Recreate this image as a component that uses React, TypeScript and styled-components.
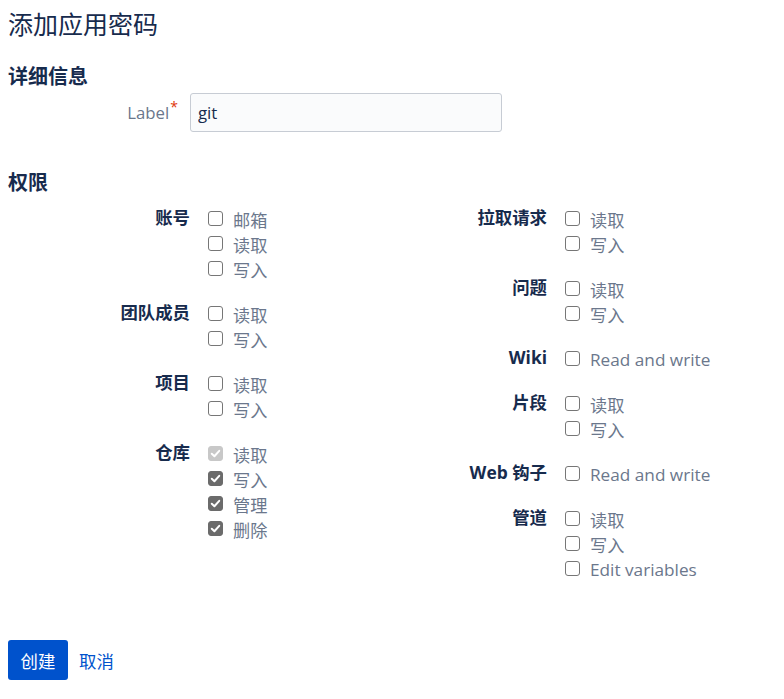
import React from "react";
import styled, { createGlobalStyle } from "styled-components";

const GlobalStyle = createGlobalStyle`
  html, body { margin: 0; padding: 0; background: #ffffff; }
  body {
    font-family: "Open Sans", "Noto Sans CJK SC", sans-serif;
    color: #172b4d;
  }
  * { box-sizing: border-box; }
`;

const Page = styled.div`
  padding: 0 8px;
  width: 784px;
`;

const Title = styled.h1`
  margin: 9px 0 0;
  font-size: 25px;
  line-height: 30px;
  font-weight: 400;
  color: #172b4d;
`;

const SectionHeading = styled.h2<{ $mt: number }>`
  margin: ${(p) => p.$mt}px 0 0;
  font-size: 20px;
  line-height: 24px;
  font-weight: 700;
  color: #172b4d;
`;

const FieldRow = styled.div`
  display: flex;
  align-items: center;
  margin-top: 4.5px;
`;

const FieldLabel = styled.label`
  width: 182px;
  padding-right: 12px;
  text-align: right;
  font-size: 16.8px;
  line-height: 25px;
  color: #6b778c;
`;

const Required = styled.span`
  color: #de350b;
  font-size: 14px;
  position: relative;
  top: -7px;
  margin-left: 1px;
`;

const TextInput = styled.input`
  width: 312px;
  height: 39px;
  border: 1px solid #c7ccd4;
  border-radius: 3px;
  background: #fafbfc;
  padding: 0 7px;
  font-family: inherit;
  font-size: 16.8px;
  color: #172b4d;
  outline: none;
`;

const PermGrid = styled.div`
  margin-top: 12px;
  display: grid;
  grid-template-columns: 357px 357px;
`;

const Column = styled.div`
  display: flex;
  flex-direction: column;
  gap: 20px;
`;

const Group = styled.div`
  display: flex;
  align-items: flex-start;
`;

const GroupLabel = styled.div`
  width: 182px;
  flex: none;
  text-align: right;
  font-size: 17.4px;
  line-height: 25px;
  font-weight: 700;
  color: #172b4d;
  margin-top: -2px;
`;

const Options = styled.div`
  margin-left: 18px;
  display: flex;
  flex-direction: column;
`;

const Option = styled.label`
  display: flex;
  align-items: center;
  height: 25px;
  font-size: 17.2px;
  color: #6b778c;
`;

const Box = styled.span<{ $checked?: boolean; $disabled?: boolean }>`
  width: 15px;
  height: 15px;
  flex: none;
  margin-right: 10px;
  margin-top: -3px;
  border-radius: 3px;
  display: flex;
  align-items: center;
  justify-content: center;
  border: 1px solid
    ${(p) => (p.$checked ? (p.$disabled ? "#c8c8c8" : "#6b6b6b") : "#767676")};
  background: ${(p) =>
    p.$checked ? (p.$disabled ? "#c8c8c8" : "#6b6b6b") : "#ffffff"};
`;

const Actions = styled.div`
  margin-top: 58px;
  display: flex;
  align-items: center;
  gap: 11px;
`;

const PrimaryButton = styled.button`
  height: 40px;
  width: 60px;
  padding: 0;
  border: none;
  border-radius: 3px;
  background: #0052cc;
  color: #ffffff;
  font-family: inherit;
  font-size: 17.4px;
  cursor: pointer;
`;

const LinkButton = styled.a`
  color: #0052cc;
  font-size: 17.4px;
  text-decoration: none;
  cursor: pointer;
`;

type Opt = { text: string; checked?: boolean; disabled?: boolean };
type G = { label: string; options: Opt[] };

const CheckMark = () => (
  <svg width="11" height="11" viewBox="0 0 10 10">
    <path
      d="M1.6 5.2 L4 7.5 L8.4 2.6"
      fill="none"
      stroke="#ffffff"
      strokeWidth="1.8"
      strokeLinecap="round"
      strokeLinejoin="round"
    />
  </svg>
);

const left: G[] = [
  { label: "账号", options: [{ text: "邮箱" }, { text: "读取" }, { text: "写入" }] },
  { label: "团队成员", options: [{ text: "读取" }, { text: "写入" }] },
  { label: "项目", options: [{ text: "读取" }, { text: "写入" }] },
  {
    label: "仓库",
    options: [
      { text: "读取", checked: true, disabled: true },
      { text: "写入", checked: true },
      { text: "管理", checked: true },
      { text: "删除", checked: true },
    ],
  },
];

const right: G[] = [
  { label: "拉取请求", options: [{ text: "读取" }, { text: "写入" }] },
  { label: "问题", options: [{ text: "读取" }, { text: "写入" }] },
  { label: "Wiki", options: [{ text: "Read and write" }] },
  { label: "片段", options: [{ text: "读取" }, { text: "写入" }] },
  { label: "Web 钩子", options: [{ text: "Read and write" }] },
  {
    label: "管道",
    options: [{ text: "读取" }, { text: "写入" }, { text: "Edit variables" }],
  },
];

const renderColumn = (groups: G[]) => (
  <Column>
    {groups.map((g) => (
      <Group key={g.label}>
        <GroupLabel>{g.label}</GroupLabel>
        <Options>
          {g.options.map((o) => (
            <Option key={o.text}>
              <Box $checked={o.checked} $disabled={o.disabled}>
                {o.checked && <CheckMark />}
              </Box>
              {o.text}
            </Option>
          ))}
        </Options>
      </Group>
    ))}
  </Column>
);

export default function App() {
  return (
    <Page>
      <GlobalStyle />
      <Title>添加应用密码</Title>
      <SectionHeading $mt={25.5}>详细信息</SectionHeading>
      <FieldRow>
        <FieldLabel>
          Label<Required>*</Required>
        </FieldLabel>
        <TextInput defaultValue="git" />
      </FieldRow>
      <SectionHeading $mt={39}>权限</SectionHeading>
      <PermGrid>
        {renderColumn(left)}
        {renderColumn(right)}
      </PermGrid>
      <Actions>
        <PrimaryButton>创建</PrimaryButton>
        <LinkButton>取消</LinkButton>
      </Actions>
    </Page>
  );
}
